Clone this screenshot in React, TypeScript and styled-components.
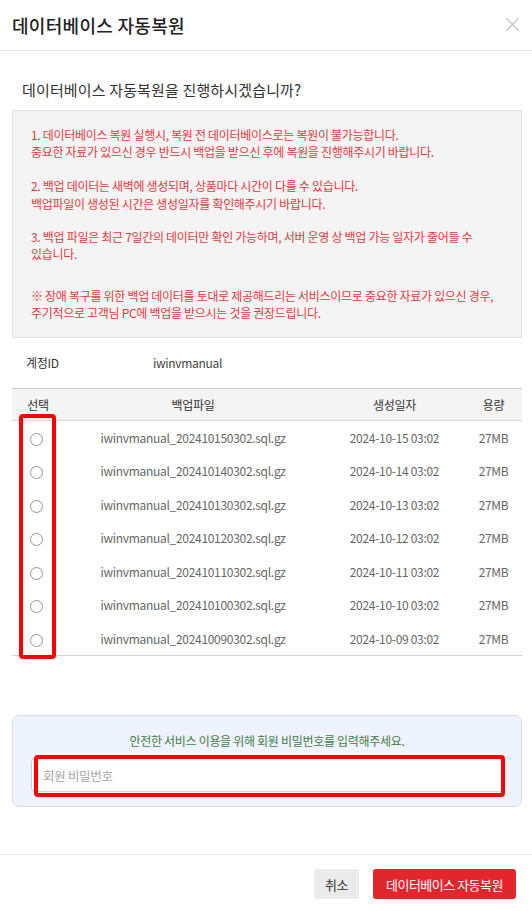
import styled, { createGlobalStyle } from "styled-components";

const GlobalStyle = createGlobalStyle`
    html, body {
        margin: 0;
        padding: 0;
        background: #fff;
    }
    body {
        font-family: "Noto Sans CJK KR", "Noto Sans", sans-serif;
        color: #333;
    }
    * { box-sizing: border-box; }
`;

const Modal = styled.div`
    width: 532px;
    height: 911px;
    display: flex;
    flex-direction: column;
    background: #fff;
`;

const Header = styled.div`
    height: 51px;
    display: flex;
    align-items: center;
    justify-content: space-between;
    padding: 0 13px 1px 12px;
    border-bottom: 1px solid #e6e6e6;
`;

const Title = styled.h1`
    margin: 0;
    font-size: 18px;
    font-weight: 500;
    letter-spacing: 0.3px;
    color: #222;
`;

const CloseButton = styled.button`
    width: 14px;
    height: 14px;
    padding: 0;
    border: 0;
    background: none;
    display: flex;
    align-items: center;
    justify-content: center;
`;

const Body = styled.div`
    flex: 1;
    padding: 0 10px 0 12px;
    display: flex;
    flex-direction: column;
`;

const Question = styled.p`
    margin: 29px 0 0 10px;
    height: 30px;
    font-size: 15px;
    line-height: 20px;
    letter-spacing: 0.15px;
    color: #333;
`;

const Notice = styled.div`
    background: #f4f4f4;
    border: 1px solid #e2e2e2;
    padding: 15px 18px 15px;
    color: #e5383d;
    font-size: 12px;
    line-height: 17.2px;
    letter-spacing: -0.3px;
`;

const NoticeParagraph = styled.p<{ $gap?: number }>`
    margin: ${(p) => p.$gap ?? 0}px 0 0;
`;

const AccountRow = styled.div`
    height: 50px;
    display: flex;
    align-items: center;
    font-size: 12px;
    letter-spacing: -0.3px;
    color: #333;
`;

const AccountLabel = styled.span`
    width: 141px;
    padding-left: 14px;
`;

const AccountValue = styled.span`
    color: #444;
`;

const Table = styled.div`
    border-top: 1px solid #cfcfcf;
    border-bottom: 1px solid #cfcfcf;
`;

const TableRow = styled.div<{ $head?: boolean }>`
    display: grid;
    grid-template-columns: 52px 258px 145px 53px;
    align-items: center;
    height: ${(p) => (p.$head ? "32px" : "33.5px")};
    background: ${(p) => (p.$head ? "#f4f4f4" : "#fff")};
    border-bottom: ${(p) => (p.$head ? "1px solid #d8d8d8" : "0")};
    font-size: 12px;
    letter-spacing: -0.3px;
    color: ${(p) => (p.$head ? "#333" : "#666")};
`;

const Cell = styled.div`
    text-align: center;
    white-space: nowrap;
`;

const TableBody = styled.div`
    position: relative;
`;

const Radio = styled.span`
    display: inline-block;
    width: 13px;
    height: 13px;
    border: 1px solid #969696;
    border-radius: 50%;
    background: #fff;
    vertical-align: middle;
    margin-right: 4px;
`;

const Highlight = styled.div<{ $left: number; $top: number; $w: number; $h: number }>`
    position: absolute;
    left: ${(p) => p.$left}px;
    top: ${(p) => p.$top}px;
    width: ${(p) => p.$w}px;
    height: ${(p) => p.$h}px;
    border: 4px solid #ff0000;
    border-radius: 4px;
    pointer-events: none;
`;

const AuthBox = styled.div`
    margin-top: 59px;
    height: 92px;
    background: #eef3fd;
    border: 1px solid #d4dcee;
    border-radius: 7px;
    padding: 16px 18px 0;
    display: flex;
    flex-direction: column;
    align-items: stretch;
`;

const AuthText = styled.p`
    margin: 0 0 8px;
    text-align: center;
    font-size: 12px;
    line-height: 18px;
    letter-spacing: -0.3px;
    color: #3f7d45;
`;

const InputWrap = styled.div`
    position: relative;
`;

const PasswordInput = styled.input`
    width: 100%;
    height: 34px;
    border: 1px solid #cfcfcf;
    border-radius: 4px;
    background: #fff;
    padding: 0 11px;
    font-family: "Noto Sans CJK KR", "Noto Sans", sans-serif;
    font-size: 12.5px;
    letter-spacing: -0.3px;
    color: #333;
    outline: none;
    &::placeholder {
        color: #a5a5a5;
    }
`;

const Footer = styled.div`
    height: 57px;
    border-top: 1px solid #e6e6e6;
    display: flex;
    justify-content: flex-end;
    align-items: flex-start;
    gap: 14px;
    padding: 14px 16px 0 0;
`;

const Button = styled.button<{ $primary?: boolean }>`
    height: 30px;
    padding: 0 ${(p) => (p.$primary ? "13px" : "11px")};
    border: 0;
    border-radius: 3px;
    background: ${(p) => (p.$primary ? "#e3262e" : "#ebebeb")};
    color: ${(p) => (p.$primary ? "#fff" : "#333")};
    font-family: "Noto Sans CJK KR", "Noto Sans", sans-serif;
    font-size: 13px;
    letter-spacing: -0.5px;
    cursor: pointer;
`;

const backups = [
    { file: "iwinvmanual_202410150302.sql.gz", date: "2024-10-15 03:02" },
    { file: "iwinvmanual_202410140302.sql.gz", date: "2024-10-14 03:02" },
    { file: "iwinvmanual_202410130302.sql.gz", date: "2024-10-13 03:02" },
    { file: "iwinvmanual_202410120302.sql.gz", date: "2024-10-12 03:02" },
    { file: "iwinvmanual_202410110302.sql.gz", date: "2024-10-11 03:02" },
    { file: "iwinvmanual_202410100302.sql.gz", date: "2024-10-10 03:02" },
    { file: "iwinvmanual_202410090302.sql.gz", date: "2024-10-09 03:02" },
];

export default function App() {
    return (
        <>
            <GlobalStyle />
            <Modal>
                <Header>
                    <Title>데이터베이스 자동복원</Title>
                    <CloseButton aria-label="닫기">
                        <svg width="13" height="13" viewBox="0 0 13 13">
                            <path d="M0.5 0.5L12.5 12.5M12.5 0.5L0.5 12.5" stroke="#c4c4c4" strokeWidth="1.3" />
                        </svg>
                    </CloseButton>
                </Header>
                <Body>
                    <Question>데이터베이스 자동복원을 진행하시겠습니까?</Question>
                    <Notice>
                        <NoticeParagraph>
                            1. 데이터베이스 복원 실행시, 복원 전 데이터베이스로는 복원이 불가능합니다.
                            <br />
                            중요한 자료가 있으신 경우 반드시 백업을 받으신 후에 복원을 진행해주시기 바랍니다.
                        </NoticeParagraph>
                        <NoticeParagraph $gap={17}>
                            2. 백업 데이터는 새벽에 생성되며, 상품마다 시간이 다를 수 있습니다.
                            <br />
                            백업파일이 생성된 시간은 생성일자를 확인해주시기 바랍니다.
                        </NoticeParagraph>
                        <NoticeParagraph $gap={16}>
                            3. 백업 파일은 최근 7일간의 데이터만 확인 가능하며, 서버 운영 상 백업 가능 일자가 줄어들 수
                            <br />
                            있습니다.
                        </NoticeParagraph>
                        <NoticeParagraph $gap={25}>
                            ※ 장애 복구를 위한 백업 데이터를 토대로 제공해드리는 서비스이므로 중요한 자료가 있으신 경우,
                            <br />
                            주기적으로 고객님 PC에 백업을 받으시는 것을 권장드립니다.
                        </NoticeParagraph>
                    </Notice>
                    <AccountRow>
                        <AccountLabel>계정ID</AccountLabel>
                        <AccountValue>iwinvmanual</AccountValue>
                    </AccountRow>
                    <Table>
                        <TableRow $head>
                            <Cell>선택</Cell>
                            <Cell>백업파일</Cell>
                            <Cell>생성일자</Cell>
                            <Cell>용량</Cell>
                        </TableRow>
                        <TableBody>
                            {backups.map((b) => (
                                <TableRow key={b.file}>
                                    <Cell>
                                        <Radio />
                                    </Cell>
                                    <Cell>{b.file}</Cell>
                                    <Cell>{b.date}</Cell>
                                    <Cell>27MB</Cell>
                                </TableRow>
                            ))}
                            <Highlight $left={7} $top={-7} $w={37} $h={245} />
                        </TableBody>
                    </Table>
                    <AuthBox>
                        <AuthText>안전한 서비스 이용을 위해 회원 비밀번호를 입력해주세요.</AuthText>
                        <InputWrap>
                            <PasswordInput type="password" placeholder="회원 비밀번호" />
                            <Highlight $left={3} $top={-3} $w={471} $h={42} />
                        </InputWrap>
                    </AuthBox>
                </Body>
                <Footer>
                    <Button>취소</Button>
                    <Button $primary>데이터베이스 자동복원</Button>
                </Footer>
            </Modal>
        </>
    );
}
